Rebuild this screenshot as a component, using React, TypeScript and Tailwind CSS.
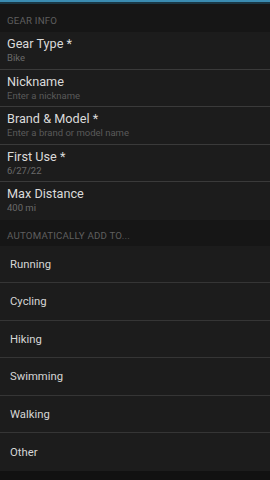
import React from 'react';

const fields = [
  { label: 'Gear Type *', value: 'Bike', dim: false },
  { label: 'Nickname', value: 'Enter a nickname', dim: true },
  { label: 'Brand & Model *', value: 'Enter a brand or model name', dim: true },
  { label: 'First Use *', value: '6/27/22', dim: false },
  { label: 'Max Distance', value: '400 mi', dim: false },
];

const activities = ['Running', 'Cycling', 'Hiking', 'Swimming', 'Walking', 'Other'];

function SectionHeader({ title, className }: { title: string; className?: string }) {
  return (
    <div className={`bg-[#161616] px-[7px] text-[9.7px] tracking-[0.2px] text-[#5f5f5f] ${className ?? ''}`}>
      {title}
    </div>
  );
}

export default function App() {
  return (
    <div
      className="w-[270px] h-[480px] bg-[#111111] flex flex-col overflow-hidden"
      style={{ fontFamily: 'Roboto, "Noto Sans", sans-serif' }}
    >
      {/* status / action bar edge */}
      <div className="h-[2px] bg-[#3b8cb2]" />
      <div className="h-[2px] bg-[#1a3846]" />

      <SectionHeader title="GEAR INFO" className="h-[28px] pt-[11px] leading-[12px]" />

      {fields.map((f, i) => (
        <div
          key={f.label}
          className={`h-[37.5px] bg-[#1c1c1c] px-[7px] pt-[3px] flex flex-col ${
            i < fields.length - 1 ? 'border-b border-[#3a3a3a]' : ''
          }`}
        >
          <div className="text-[12.7px] leading-[17px] text-[#dadada]">{f.label}</div>
          <div className={`text-[9.5px] leading-[12px] ${f.dim ? 'text-[#5a5a5a]' : 'text-[#6a6a6a]'}`}>
            {f.value}
          </div>
        </div>
      ))}

      <SectionHeader title="AUTOMATICALLY ADD TO..." className="h-[26px] pt-[10px] leading-[12px]" />

      {activities.map((a, i) => (
        <div
          key={a}
          className={`h-[37.5px] bg-[#1c1c1c] px-[10px] pt-[3px] flex items-center ${
            i < activities.length - 1 ? 'border-b border-[#353535]' : ''
          }`}
        >
          <span className="text-[11.3px] text-[#d6d6d6]">{a}</span>
        </div>
      ))}

      <div className="flex-1 bg-[#111111]" />
    </div>
  );
}
